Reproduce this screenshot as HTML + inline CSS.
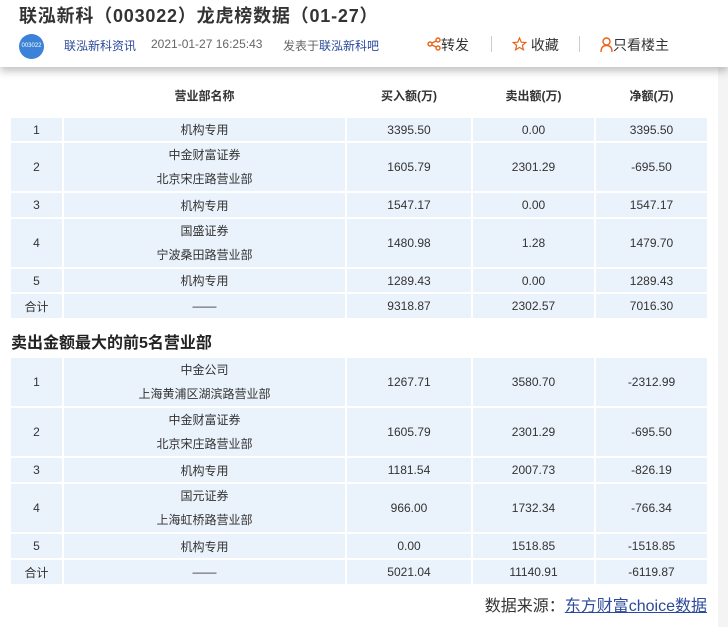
<!DOCTYPE html>
<html><head><meta charset="utf-8"><style>
*{margin:0;padding:0;box-sizing:border-box}
body{width:728px;height:627px;overflow:hidden;background:#f4f4f4;font-family:"Liberation Sans","Noto Sans CJK SC",sans-serif;color:#333;position:relative}
.main{position:absolute;left:0;top:0;width:718px;height:627px;background:#fff}
.hdr{position:absolute;left:0;top:0;width:728px;height:67px;background:#fff;box-shadow:0 4px 8px rgba(0,0,0,.25);z-index:2}
.title{position:absolute;left:19px;top:2px;font-size:18px;font-weight:bold;color:#333;letter-spacing:0.8px}
.av{position:absolute;left:19px;top:34px;width:25px;height:25px;border-radius:50%;background:#3b82d8;color:#fff;font-size:6px;line-height:25px;text-align:center}
.meta{position:absolute;top:37px;font-size:12px;color:#666}
.blue{color:#2b4a9c}
.act{position:absolute;top:35px;font-size:14px;color:#333}
.sep{position:absolute;top:36px;width:1px;height:16px;background:#ccc}
table{position:absolute;left:11px;border-collapse:separate;border-spacing:2px;margin-left:-2px;font-size:12px;color:#333}
td{background:#eaf2fb;text-align:center;vertical-align:middle;padding:0}
.h td{background:none;font-weight:bold;font-size:12px}
.h2{position:absolute;left:11px;top:329px;font-size:16px;font-weight:bold;color:#222}
.src{position:absolute;right:21px;top:592px;font-size:16px;color:#333}
.src a{color:#2b4a9c;text-decoration:underline}
td div{line-height:24px}
</style></head><body>
<div class="main"></div>
<div class="hdr">
<div class="title">联泓新科（003022）龙虎榜数据（01-27）</div>
<div class="av">003022</div>
<div class="meta blue" style="left:64px">联泓新科资讯</div>
<div class="meta" style="left:151px">2021-01-27 16:25:43</div>
<div class="meta" style="left:283px">发表于<span class="blue">联泓新科吧</span></div>
<div class="act" style="left:427px"><svg width="14" height="14" viewBox="0 0 14 14" style="vertical-align:-1px"><g fill="none" stroke="#e8631a" stroke-width="1.4"><circle cx="11" cy="3" r="2"/><circle cx="3" cy="7" r="2"/><circle cx="11" cy="11" r="2"/><path d="M5 6L9 4M5 8L9 10"/></g></svg>转发</div>
<div class="sep" style="left:491px"></div>
<div class="act" style="left:512px"><svg width="15" height="14" viewBox="0 0 15 14" style="vertical-align:-1px"><path d="M7.5 1L9.3 5.2 13.8 5.5 10.4 8.4 11.4 12.8 7.5 10.4 3.6 12.8 4.6 8.4 1.2 5.5 5.7 5.2Z" fill="none" stroke="#e8631a" stroke-width="1.2"/></svg> 收藏</div>
<div class="sep" style="left:579px"></div>
<div class="act" style="left:600px"><svg width="13" height="15" viewBox="0 0 13 15" style="vertical-align:-2px"><g fill="none" stroke="#e8631a" stroke-width="1.4"><circle cx="6.5" cy="4.5" r="3.5"/><path d="M1 15C1 10 3.5 8.5 6.5 8.5S12 10 12 15"/></g></svg>只看楼主</div>
</div>

<table style="top:80px">
<tr class="h"><td style="width:51px;height:26px"></td><td style="width:281px">营业部名称</td><td style="width:124px">买入额(万)</td><td style="width:121px">卖出额(万)</td><td style="width:111px">净额(万)</td></tr>
<tr><td style="height:6px;background:none" colspan="5"></td></tr>
<tr><td style="height:23px">1</td><td>机构专用</td><td>3395.50</td><td>0.00</td><td>3395.50</td></tr>
<tr><td style="height:48px">2</td><td><div>中金财富证券</div><div>北京宋庄路营业部</div></td><td>1605.79</td><td>2301.29</td><td>-695.50</td></tr>
<tr><td style="height:24px">3</td><td>机构专用</td><td>1547.17</td><td>0.00</td><td>1547.17</td></tr>
<tr><td style="height:48px">4</td><td><div>国盛证券</div><div>宁波桑田路营业部</div></td><td>1480.98</td><td>1.28</td><td>1479.70</td></tr>
<tr><td style="height:23px">5</td><td>机构专用</td><td>1289.43</td><td>0.00</td><td>1289.43</td></tr>
<tr><td style="height:24px">合计</td><td>——</td><td>9318.87</td><td>2302.57</td><td>7016.30</td></tr>
</table>

<div class="h2">卖出金额最大的前5名营业部</div>

<table style="top:356px">
<tr><td style="width:51px;height:48px">1</td><td style="width:281px"><div>中金公司</div><div>上海黄浦区湖滨路营业部</div></td><td style="width:124px">1267.71</td><td style="width:121px">3580.70</td><td style="width:111px">-2312.99</td></tr>
<tr><td style="height:48px">2</td><td><div>中金财富证券</div><div>北京宋庄路营业部</div></td><td>1605.79</td><td>2301.29</td><td>-695.50</td></tr>
<tr><td style="height:24px">3</td><td>机构专用</td><td>1181.54</td><td>2007.73</td><td>-826.19</td></tr>
<tr><td style="height:48px">4</td><td><div>国元证券</div><div>上海虹桥路营业部</div></td><td>966.00</td><td>1732.34</td><td>-766.34</td></tr>
<tr><td style="height:24px">5</td><td>机构专用</td><td>0.00</td><td>1518.85</td><td>-1518.85</td></tr>
<tr><td style="height:24px">合计</td><td>——</td><td>5021.04</td><td>11140.91</td><td>-6119.87</td></tr>
</table>

<div class="src">数据来源：<a>东方财富choice数据</a></div>
</body></html>
